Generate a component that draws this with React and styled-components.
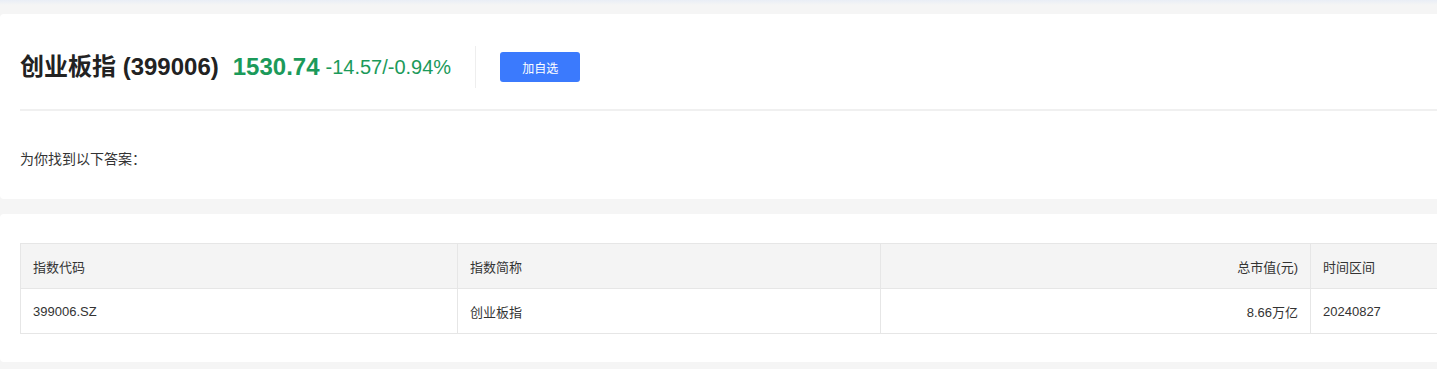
import React from 'react';
import styled, { createGlobalStyle } from 'styled-components';

const GlobalStyle = createGlobalStyle`
  html, body {
    margin: 0;
    padding: 0;
    background: #f5f5f5;
    overflow: hidden;
  }
  body {
    font-family: "Liberation Sans", "Noto Sans CJK SC", sans-serif;
    color: #333;
  }
`;

const Page = styled.div`
  width: 1480px;
  min-height: 369px;
  padding-top: 14px;
  background: linear-gradient(#e9eef6 0, #f5f5f5 5px);
  display: flex;
  flex-direction: column;
  gap: 15px;
`;

const Card = styled.section`
  background: #fff;
  border-radius: 4px;
  padding: ${(p) => p.$pad};
`;

const Header = styled.div`
  display: flex;
  align-items: center;
  height: 42px;
`;

const Title = styled.h1`
  margin: 0;
  font-size: 24px;
  font-weight: bold;
  color: #222;
  line-height: 30px;
  white-space: nowrap;
`;

const Price = styled.span`
  margin-left: 14px;
  font-size: 24px;
  font-weight: bold;
  color: #1b9a5a;
  line-height: 30px;
`;

const Change = styled.span`
  margin-left: 6px;
  font-size: 20px;
  color: #1b9a5a;
  line-height: 30px;
`;

const VDivider = styled.div`
  width: 1px;
  height: 42px;
  background: #eee;
  margin: 0 24px 0 24px;
`;

const AddButton = styled.button`
  width: 80px;
  height: 30px;
  border: none;
  border-radius: 3px;
  background: #3b7afd;
  color: #fff;
  font-family: inherit;
  font-size: 12px;
  cursor: pointer;
`;

const HDivider = styled.div`
  height: 2px;
  background: #f0f0f0;
  margin-top: 21px;
`;

const Answer = styled.p`
  margin: 40px 0 0;
  font-size: 14px;
  line-height: 17px;
  color: #333;
`;

const Table = styled.table`
  width: 1420px;
  border-collapse: collapse;
  font-size: 13px;
  color: #333;
  table-layout: fixed;
`;

const Th = styled.th`
  height: 44px;
  padding: 0 12px;
  background: #f4f4f4;
  border: 1px solid #e6e6e6;
  font-weight: normal;
  text-align: ${(p) => (p.$right ? 'right' : 'left')};
`;

const Td = styled.td`
  height: 44px;
  padding: 0 12px;
  border: 1px solid #e6e6e6;
  text-align: ${(p) => (p.$right ? 'right' : 'left')};
`;

const columns = [
  { title: '指数代码', width: 437, value: '399006.SZ' },
  { title: '指数简称', width: 423, value: '创业板指' },
  { title: '总市值(元)', width: 430, value: '8.66万亿', right: true },
  { title: '时间区间', width: 130, value: '20240827' },
];

const App = () => {
  return (
    <>
      <GlobalStyle />
      <Page>
        <Card $pad="32px 0 31px 20px">
          <Header>
            <Title>创业板指 (399006)</Title>
            <Price>1530.74</Price>
            <Change>-14.57/-0.94%</Change>
            <VDivider />
            <AddButton>加自选</AddButton>
          </Header>
          <HDivider />
          <Answer>为你找到以下答案：</Answer>
        </Card>
        <Card $pad="29px 0 28px 20px">
          <Table>
            <colgroup>
              {columns.map((c) => (
                <col key={c.title} style={{ width: c.width }} />
              ))}
            </colgroup>
            <thead>
              <tr>
                {columns.map((c) => (
                  <Th key={c.title} $right={c.right}>{c.title}</Th>
                ))}
              </tr>
            </thead>
            <tbody>
              <tr>
                {columns.map((c) => (
                  <Td key={c.title} $right={c.right}>{c.value}</Td>
                ))}
              </tr>
            </tbody>
          </Table>
        </Card>
      </Page>
    </>
  );
};

export default App;
